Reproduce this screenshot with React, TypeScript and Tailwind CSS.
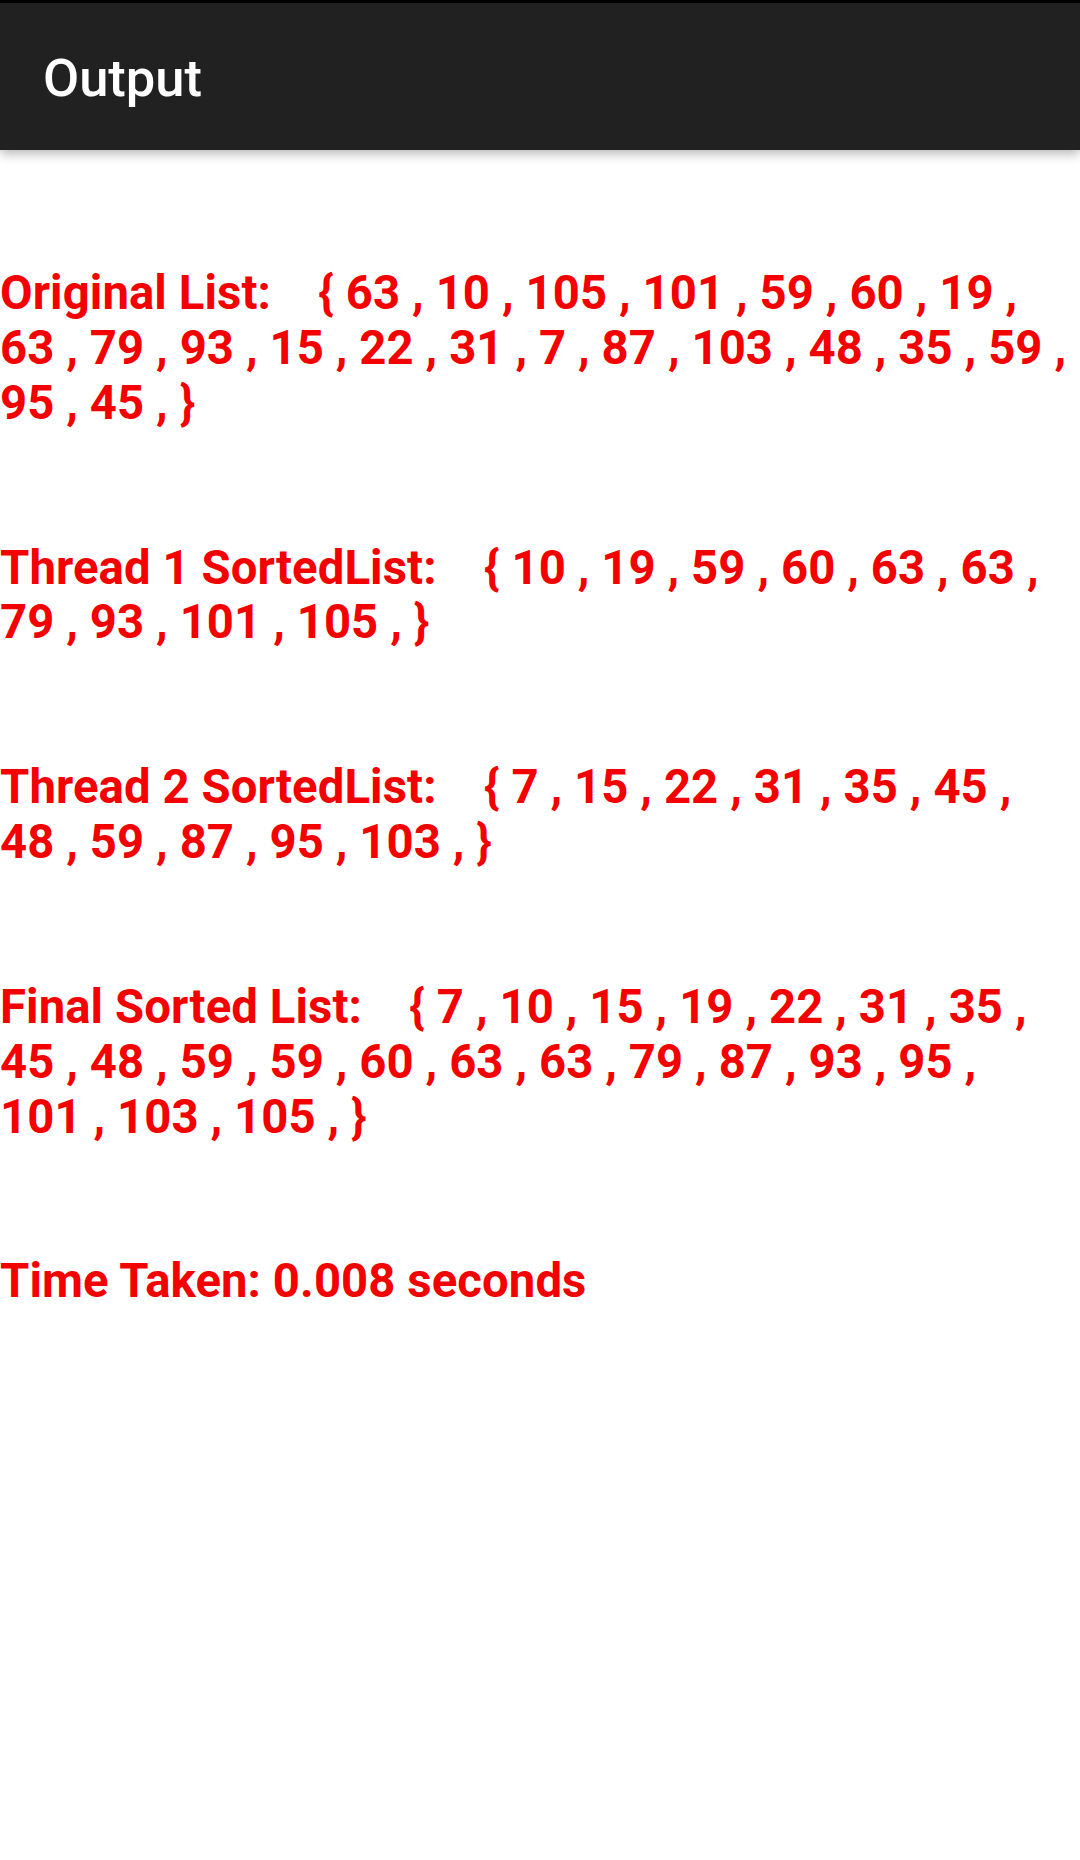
import React from "react";

const N = "\u00a0";

function list(nums: number[]) {
  return "{" + N + nums.map((n) => n + N + ",").join(" ") + N + "}";
}

const text =
  "Original List:    " + list([63, 10, 105, 101, 59, 60, 19, 63, 79, 93, 15, 22, 31, 7, 87, 103, 48, 35, 59, 95, 45]) + "\n\n\n" +
  "Thread 1 SortedList:    " + list([10, 19, 59, 60, 63, 63, 79, 93, 101, 105]) + "\n\n\n" +
  "Thread 2 SortedList:    " + list([7, 15, 22, 31, 35, 45, 48, 59, 87, 95, 103]) + "\n\n\n" +
  "Final Sorted List:    " + list([7, 10, 15, 19, 22, 31, 35, 45, 48, 59, 59, 60, 63, 63, 79, 87, 93, 95, 101, 103, 105]) + "\n\n\n" +
  "Time Taken: 0.008 seconds";

export default function App() {
  return (
    <div className="w-[1080px] h-[1860px] bg-white overflow-hidden" style={{ fontFamily: "Roboto, 'Liberation Sans', sans-serif" }}>
      <div className="relative z-10 h-[150px] bg-[#212121] border-t-[3px] border-black flex items-center pl-[43px] pt-[4px] shadow-[0_4px_10px_rgba(0,0,0,0.28)]">
        <span className="text-white text-[52.5px] font-medium leading-none">Output</span>
      </div>
      <div className="pt-[116px] whitespace-pre-wrap text-[#f40000] font-bold text-[47.25px] leading-[54.9px] tracking-[0.1px]">
        {text}
      </div>
    </div>
  );
}
